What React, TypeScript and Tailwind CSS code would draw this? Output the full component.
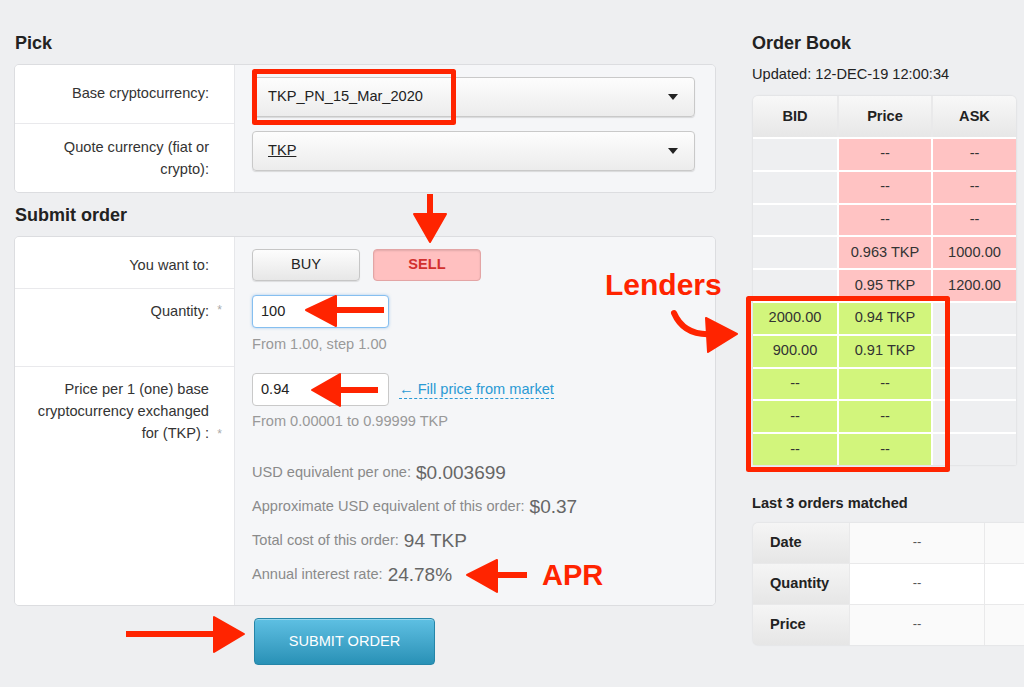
import React from "react";

const FONT = { fontFamily: '"Liberation Sans", Arial, Helvetica, sans-serif' };

function Select({ value, underline }: { value: string; underline?: boolean }) {
  return (
    <div className="flex h-[40px] w-[443px] items-center justify-between rounded-[4px] border border-[#c9c9c9] bg-gradient-to-b from-[#fdfdfd] to-[#ececec] pl-[15px] pr-[16px] shadow-[0_1px_1px_rgba(0,0,0,0.12)]">
      <span className={`text-[14.6px] text-[#222] ${underline ? "underline" : ""}`}>{value}</span>
      <span className="h-0 w-0 border-x-[5px] border-t-[6px] border-x-transparent border-t-[#222]" />
    </div>
  );
}

function Label({ children, star, pt, align = "start" }: { children: React.ReactNode; star?: boolean; pt: string; align?: "start" | "end" }) {
  return (
    <div className={`flex items-start justify-end border-b border-[#e9e9ec] bg-white pr-[12px] ${pt}`}>
      <div className={`flex ${align === "end" ? "items-end" : "items-start"}`}>
        <div className="text-right text-[14.6px] leading-[22px] text-[#333]">{children}</div>
        <span className="w-[13px] text-right text-[12px] leading-[20px] text-[#aaa]">{star ? "*" : ""}</span>
      </div>
    </div>
  );
}

function Stat({ label, value }: { label: string; value: string }) {
  return (
    <div className="flex h-[34px] items-center">
      <span className="text-[14.6px] text-[#8a8a8a]">{label}</span>
      <span className="ml-[5px] text-[19px] text-[#666]">{value}</span>
    </div>
  );
}

const ask = [
  ["--", "--"],
  ["--", "--"],
  ["--", "--"],
  ["0.963 TKP", "1000.00"],
  ["0.95 TKP", "1200.00"],
];
const bid = [
  ["2000.00", "0.94 TKP"],
  ["900.00", "0.91 TKP"],
  ["--", "--"],
  ["--", "--"],
  ["--", "--"],
];

function Arrow() {
  const red = "#ff2400";
  return (
    <svg className="pointer-events-none absolute inset-0" width="1024" height="687" viewBox="0 0 1024 687">
      <g fill={red} stroke={red} strokeLinejoin="round">
        {/* box round the base currency */}
        <rect x="254.5" y="71.5" width="199" height="51" fill="none" strokeWidth="5" />
        {/* box round the lenders */}
        <rect x="748.5" y="298.5" width="199" height="171" fill="none" strokeWidth="5" />
        {/* down arrow to SELL */}
        <line x1="430" y1="194" x2="430" y2="220" strokeWidth="6" />
        <polygon points="414,214 446,214 430,242" strokeWidth="2" />
        {/* quantity */}
        <line x1="330" y1="310" x2="384" y2="310" strokeWidth="6" />
        <polygon points="336,296 336,326 306,310" strokeWidth="2" />
        {/* price */}
        <line x1="334" y1="390" x2="378" y2="390" strokeWidth="6" />
        <polygon points="340,374 340,406 312,390" strokeWidth="2" />
        {/* APR */}
        <line x1="492" y1="575" x2="527" y2="575" strokeWidth="6" />
        <polygon points="497,560 497,592 467,575" strokeWidth="2" />
        {/* submit */}
        <line x1="126" y1="634" x2="218" y2="634" strokeWidth="6" />
        <polygon points="214,617 214,652 244,634" strokeWidth="2" />
        {/* lenders curve */}
        <path d="M674 313 Q684 336 712 334" fill="none" strokeWidth="6" strokeLinecap="round" />
        <polygon points="706,318 737,334 708,352" strokeWidth="2" />
      </g>
    </svg>
  );
}

export default function App() {
  return (
    <div className="relative h-[687px] w-[1024px] overflow-hidden bg-[#eeeff1]" style={FONT}>
      <div className="flex pt-[31px]">
        {/* left column */}
        <div className="ml-[14px] w-[702px]">
          <h2 className="mb-[9px] pl-px text-[18px] font-bold leading-[24px] text-[#222]">Pick</h2>
          <div className="grid grid-cols-[219px_1fr] overflow-hidden rounded-[5px] border border-[#dcdde0]">
            <Label pt="pt-[17px] h-[59px]">Base cryptocurrency:</Label>
            <div className="border-l border-[#e6e7ea] bg-[#f5f6f8] pl-[17px] pt-[12px]">
              <Select value="TKP_PN_15_Mar_2020" />
            </div>
            <Label pt="pt-[12px] h-[68px] border-b-0">
              Quote currency (fiat or
              <br />
              crypto):
            </Label>
            <div className="border-l border-[#e6e7ea] bg-[#f5f6f8] pl-[17px] pt-[7px]">
              <Select value="TKP" underline />
            </div>
          </div>

          <h2 className="mb-[9px] mt-[10px] pl-px text-[18px] font-bold leading-[24px] text-[#222]">Submit order</h2>
          <div className="grid grid-cols-[219px_1fr] overflow-hidden rounded-[5px] border border-[#dcdde0]">
            <Label pt="pt-[17px] h-[52px]">You want to:</Label>
            <div className="flex gap-[13px] border-l border-[#e6e7ea] bg-[#f5f6f8] pl-[17px] pt-[12px]">
              <button className="h-[32px] w-[108px] rounded-[4px] border border-[#c6c6c6] bg-gradient-to-b from-[#fdfdfd] to-[#e7e7e7] text-[14.6px] text-[#222] shadow-[0_1px_1px_rgba(0,0,0,0.1)]">
                BUY
              </button>
              <button className="h-[32px] w-[108px] rounded-[4px] border border-[#e3a5a5] bg-[#ffc0c0] text-[14.6px] font-bold text-[#d2302e] shadow-[inset_0_1px_2px_rgba(0,0,0,0.12)]">
                SELL
              </button>
            </div>
            <Label pt="pt-[11px] h-[78px]" star>
              Quantity:
            </Label>
            <div className="border-l border-[#e6e7ea] bg-[#f5f6f8] pl-[17px] pt-[6px]">
              <div className="flex h-[33px] w-[137px] items-center rounded-[4px] border border-[#86bff0] bg-white pl-[8px] text-[14.6px] text-[#222] shadow-[0_0_3px_rgba(90,160,230,0.5)]">
                100
              </div>
              <div className="mt-[7px] text-[14.6px] leading-[18px] text-[#999]">From 1.00, step 1.00</div>
            </div>
            <Label pt="pt-[11px] h-[238px] border-b-0" star align="end">
              Price per 1 (one) base
              <br />
              cryptocurrency exchanged
              <br />
              for (TKP) :
            </Label>
            <div className="border-l border-[#e6e7ea] bg-[#f5f6f8] pl-[17px] pt-[6px]">
              <div className="flex items-center">
                <div className="flex h-[33px] w-[137px] items-center rounded-[4px] border border-[#c9c9c9] bg-white pl-[8px] text-[14.6px] text-[#222]">
                  0.94
                </div>
                <span className="ml-[10px] border-b border-dashed border-[#2a9ad4] text-[14.6px] leading-[17px] text-[#2a9ad4]">
                  ← Fill price from market
                </span>
              </div>
              <div className="mt-[6px] text-[14.6px] leading-[18px] text-[#999]">From 0.00001 to 0.99999 TKP</div>
              <div className="mt-[26px]">
                <Stat label="USD equivalent per one:" value="$0.003699" />
                <Stat label="Approximate USD equivalent of this order:" value="$0.37" />
                <Stat label="Total cost of this order:" value="94 TKP" />
                <Stat label="Annual interest rate:" value="24.78%" />
              </div>
            </div>
          </div>

          <button className="ml-[240px] mt-[12px] h-[47px] w-[181px] rounded-[4px] border border-[#2585a8] bg-gradient-to-b from-[#5ec0e3] to-[#2891b6] text-[14.6px] text-white shadow-[inset_0_1px_0_rgba(255,255,255,0.35)]">
            SUBMIT ORDER
          </button>
        </div>

        {/* right column */}
        <div className="ml-[36px] w-[272px]">
          <h2 className="mb-[9px] text-[18px] font-bold leading-[24px] text-[#222]">Order Book</h2>
          <div className="text-[14.6px] leading-[20px] text-[#222]">Updated: 12-DEC-19 12:00:34</div>

          <div className="ml-px mt-[12px] w-[263px] overflow-hidden rounded-t-[5px] bg-white shadow-[0_0_2px_rgba(0,0,0,0.15)]">
            <div className="grid h-[41px] grid-cols-[84px_92px_1fr] gap-x-[2px] bg-[#e9e9ea]">
              {["BID", "Price", "ASK"].map((h) => (
                <div key={h} className="flex items-center justify-center bg-gradient-to-b from-[#f8f8f8] to-[#e7e7e7] text-[14.6px] font-bold text-[#222]">
                  {h}
                </div>
              ))}
            </div>
            <div className="grid grid-cols-[84px_92px_1fr] gap-[2px] pt-[2px]">
              {ask.map(([p, a], i) => (
                <React.Fragment key={"a" + i}>
                  <div className="h-[30.8px] bg-[#eeeff1]" />
                  <div className="flex h-[30.8px] items-center justify-center bg-[#ffc3c3] text-[14.6px] text-[#333]">{p}</div>
                  <div className="flex h-[30.8px] items-center justify-center bg-[#ffc3c3] text-[14.6px] text-[#333]">{a}</div>
                </React.Fragment>
              ))}
              {bid.map(([b, p], i) => (
                <React.Fragment key={"b" + i}>
                  <div className="flex h-[30.8px] items-center justify-center bg-[#d2f57c] text-[14.6px] text-[#333]">{b}</div>
                  <div className="flex h-[30.8px] items-center justify-center bg-[#d2f57c] text-[14.6px] text-[#333]">{p}</div>
                  <div className="h-[30.8px] bg-[#eeeff1]" />
                </React.Fragment>
              ))}
            </div>
          </div>

          <div className="mt-[28px] text-[14.6px] font-bold leading-[20px] text-[#222]">Last 3 orders matched</div>
          <div className="ml-px mt-[10px] w-[300px] overflow-hidden rounded-l-[5px] bg-[#e9e9ea] shadow-[0_0_2px_rgba(0,0,0,0.12)]">
            {["Date", "Quantity", "Price"].map((r, i) => (
              <div key={r} className={`grid h-[40px] grid-cols-[96px_134px_1fr] gap-x-[1px] ${i > 0 ? "mt-[1px]" : ""}`}>
                <div className="flex items-center bg-gradient-to-b from-[#f5f5f5] to-[#e6e6e6] pl-[17px] text-[14.6px] font-bold text-[#222]">
                  {r}
                </div>
                <div className={`flex justify-center pt-[9px] text-[13px] text-[#555] ${i === 1 ? "bg-white" : "bg-[#fafafa]"}`}>--</div>
                <div className={i === 1 ? "bg-white" : "bg-[#fafafa]"} />
              </div>
            ))}
          </div>
        </div>
      </div>

      <Arrow />
      <div className="pointer-events-none absolute left-[605px] top-[270px] text-[30px] font-bold leading-[30px] text-[#ff2400]">Lenders</div>
      <div className="pointer-events-none absolute left-[542px] top-[560px] text-[29px] font-bold leading-[30px] text-[#ff2400]">APR</div>
    </div>
  );
}
